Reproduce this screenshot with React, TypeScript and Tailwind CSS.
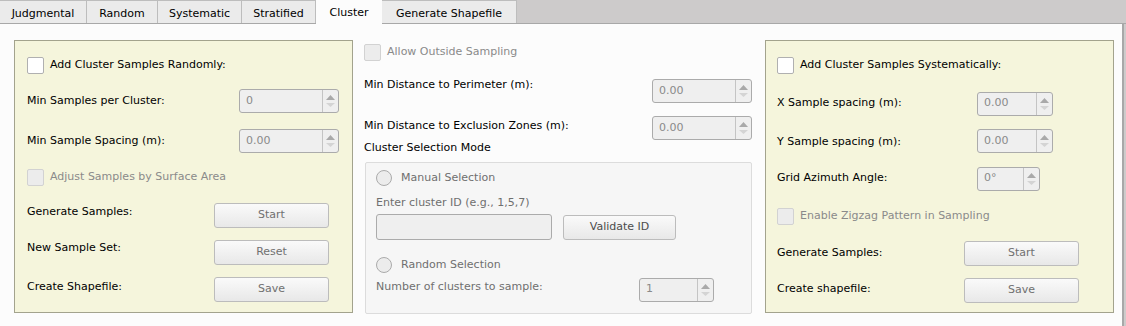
import React from 'react';

const font = { fontFamily: '"DejaVu Sans", Verdana, sans-serif' };

function SpinBox({ value, width }: { value: string; width: string }) {
  return (
    <div className={`flex h-[24px] ${width} rounded-[3px] border border-[#ababab] bg-[#efefef]`}>
      <div className="flex flex-1 items-center pl-[6px] text-[#8a8a8a]">{value}</div>
      <div className="flex w-[16px] flex-col items-center justify-center gap-[3px] border-l border-[#c4c4c4]">
        <svg width="9" height="5" viewBox="0 0 9 5">
          <path d="M0 5 L4.5 0 L9 5 Z" fill="#a9a9a9" />
        </svg>
        <svg width="9" height="4" viewBox="0 0 9 4">
          <path d="M0 0 L9 0 L4.5 4 Z" fill="#d4d4d4" />
        </svg>
      </div>
    </div>
  );
}

function CheckBox({ label, enabled }: { label: string; enabled?: boolean }) {
  return (
    <div className="flex items-center gap-[6px]">
      <div
        className={
          enabled
            ? 'h-[17px] w-[17px] rounded-[2px] border border-[#b0b0b0] bg-white'
            : 'h-[17px] w-[17px] rounded-[2px] border border-[#d2d2d2] bg-[#ececec]'
        }
      />
      <span className={enabled ? 'text-black' : 'text-[#8a8a8a]'}>{label}</span>
    </div>
  );
}

function Radio({ label }: { label: string }) {
  return (
    <div className="flex items-center gap-[9px]">
      <div className="h-[16px] w-[16px] rounded-full border border-[#ababab] bg-[#ececec]" />
      <span className="text-[#6f6f6f]">{label}</span>
    </div>
  );
}

function Btn({ label, width, dark }: { label: string; width: string; dark?: boolean }) {
  return (
    <div
      className={`flex h-[25px] ${width} items-center justify-center rounded-[3px] border border-[#bcbcbc] bg-gradient-to-b from-[#fafafa] to-[#e8e8e8] ${
        dark ? 'text-[#4c4c4c]' : 'text-[#707070]'
      }`}
    >
      {label}
    </div>
  );
}

const tabs = [
  { name: 'Judgmental', w: 'w-[87px]' },
  { name: 'Random', w: 'w-[71px]' },
  { name: 'Systematic', w: 'w-[84px]' },
  { name: 'Stratified', w: 'w-[74px]' },
  { name: 'Cluster', w: 'w-[66px]', active: true },
  { name: 'Generate Shapefile', w: 'w-[135px]' },
];

export default function App() {
  return (
    <div className="flex h-[326px] w-[1126px] flex-col overflow-hidden bg-[#cdcbcb] text-[11px] text-black" style={font}>
      {/* Tab strip */}
      <div className="flex h-[24px] border-b border-[#a8a8a8]">
        {tabs.map((t) =>
          t.active ? (
            <div key={t.name} className={`${t.w} -mb-[1px] flex items-start justify-center bg-[#fcfcfc] pt-[5px]`}>
              {t.name}
            </div>
          ) : (
            <div
              key={t.name}
              className={`${t.w} flex items-center justify-center border-r border-t border-[#bdbdbd] bg-[#ebebeb] pt-[5px]`}
            >
              {t.name}
            </div>
          )
        )}
      </div>

      {/* Content pane */}
      <div className="flex flex-1">
        <div className="flex w-[1124px] gap-[11px] border-r-2 border-[#a8a8a8] bg-[#fcfcfc] pl-[14px] pt-[16px]">
          {/* Random cluster panel */}
          <div className="flex h-[273px] w-[339px] flex-col border border-[#a3a38d] bg-[#f5f5dc] pl-[12px] pt-[12px]">
            <div className="flex h-[24px] items-center">
              <CheckBox label="Add Cluster Samples Randomly:" enabled />
            </div>
            <div className="mt-[12px] flex h-[24px] items-center">
              <span className="w-[212px]">Min Samples per Cluster:</span>
              <SpinBox value="0" width="w-[100px]" />
            </div>
            <div className="mt-[16px] flex h-[24px] items-center">
              <span className="w-[212px]">Min Sample Spacing (m):</span>
              <SpinBox value="0.00" width="w-[100px]" />
            </div>
            <div className="mt-[12px] flex h-[24px] items-center">
              <CheckBox label="Adjust Samples by Surface Area" />
            </div>
            <div className="mt-[14px] flex h-[25px] items-center">
              <span className="mb-[7px] w-[187px]">Generate Samples:</span>
              <Btn label="Start" width="w-[115px]" />
            </div>
            <div className="mt-[12px] flex h-[25px] items-center">
              <span className="mb-[8px] w-[187px]">New Sample Set:</span>
              <Btn label="Reset" width="w-[115px]" />
            </div>
            <div className="mt-[12px] flex h-[25px] items-center">
              <span className="mb-[4px] w-[187px]">Create Shapefile:</span>
              <Btn label="Save" width="w-[115px]" />
            </div>
          </div>

          {/* Middle column */}
          <div className="flex w-[388px] flex-col">
            <div className="flex h-[24px] items-center">
              <CheckBox label="Allow Outside Sampling" />
            </div>
            <div className="mt-[15px] flex h-[24px] items-center">
              <span className="mb-[12px] w-[288px]">Min Distance to Perimeter (m):</span>
              <SpinBox value="0.00" width="w-[100px]" />
            </div>
            <div className="mt-[13px] flex h-[24px] items-center">
              <span className="mb-[4px] w-[288px]">Min Distance to Exclusion Zones (m):</span>
              <SpinBox value="0.00" width="w-[100px]" />
            </div>
            <div className="flex h-[16px] items-center pt-[1px]">Cluster Selection Mode</div>
            <div className="ml-[1px] mt-[6px] flex h-[152px] flex-col rounded-[2px] border border-[#dcdcdc] bg-[#f6f6f6] pl-[10px] pt-[2px]">
              <div className="flex h-[24px] items-center pt-[2px]">
                <Radio label="Manual Selection" />
              </div>
              <div className="mt-[7px] flex h-[14px] items-center text-[#6f6f6f]">Enter cluster ID (e.g., 1,5,7)</div>
              <div className="mt-[4px] flex h-[26px] items-center gap-[11px]">
                <div className="h-[26px] w-[176px] rounded-[3px] border border-[#ababab] bg-[#efefef]" />
                <Btn label="Validate ID" width="w-[113px]" dark />
              </div>
              <div className="mt-[15px] flex h-[20px] items-center">
                <Radio label="Random Selection" />
              </div>
              <div className="mt-[2px] flex h-[25px] items-center">
                <span className="mb-[4px] w-[263px] text-[#6f6f6f]">Number of clusters to sample:</span>
                <SpinBox value="1" width="w-[75px]" />
              </div>
            </div>
          </div>

          {/* Systematic cluster panel */}
          <div className="ml-[2px] flex h-[273px] w-[349px] flex-col border border-[#a3a38d] bg-[#f5f5dc] pl-[11px] pt-[12px]">
            <div className="flex h-[24px] items-center">
              <CheckBox label="Add Cluster Samples Systematically:" enabled />
            </div>
            <div className="mt-[14px] flex h-[25px] items-center">
              <span className="w-[200px]">X Sample spacing (m):</span>
              <SpinBox value="0.00" width="w-[76px]" />
            </div>
            <div className="mt-[13px] flex h-[24px] items-center">
              <span className="mt-[2px] w-[200px]">Y Sample spacing (m):</span>
              <SpinBox value="0.00" width="w-[76px]" />
            </div>
            <div className="mt-[13px] flex h-[25px] items-center">
              <span className="w-[200px]">Grid Azimuth Angle:</span>
              <SpinBox value="0°" width="w-[63px]" />
            </div>
            <div className="mt-[13px] flex h-[24px] items-center">
              <CheckBox label="Enable Zigzag Pattern in Sampling" />
            </div>
            <div className="mt-[13px] flex h-[25px] items-center">
              <span className="w-[187px]">Generate Samples:</span>
              <Btn label="Start" width="w-[115px]" />
            </div>
            <div className="mt-[12px] flex h-[25px] items-center">
              <span className="mb-[3px] w-[187px]">Create shapefile:</span>
              <Btn label="Save" width="w-[115px]" />
            </div>
          </div>
        </div>
      </div>
    </div>
  );
}
